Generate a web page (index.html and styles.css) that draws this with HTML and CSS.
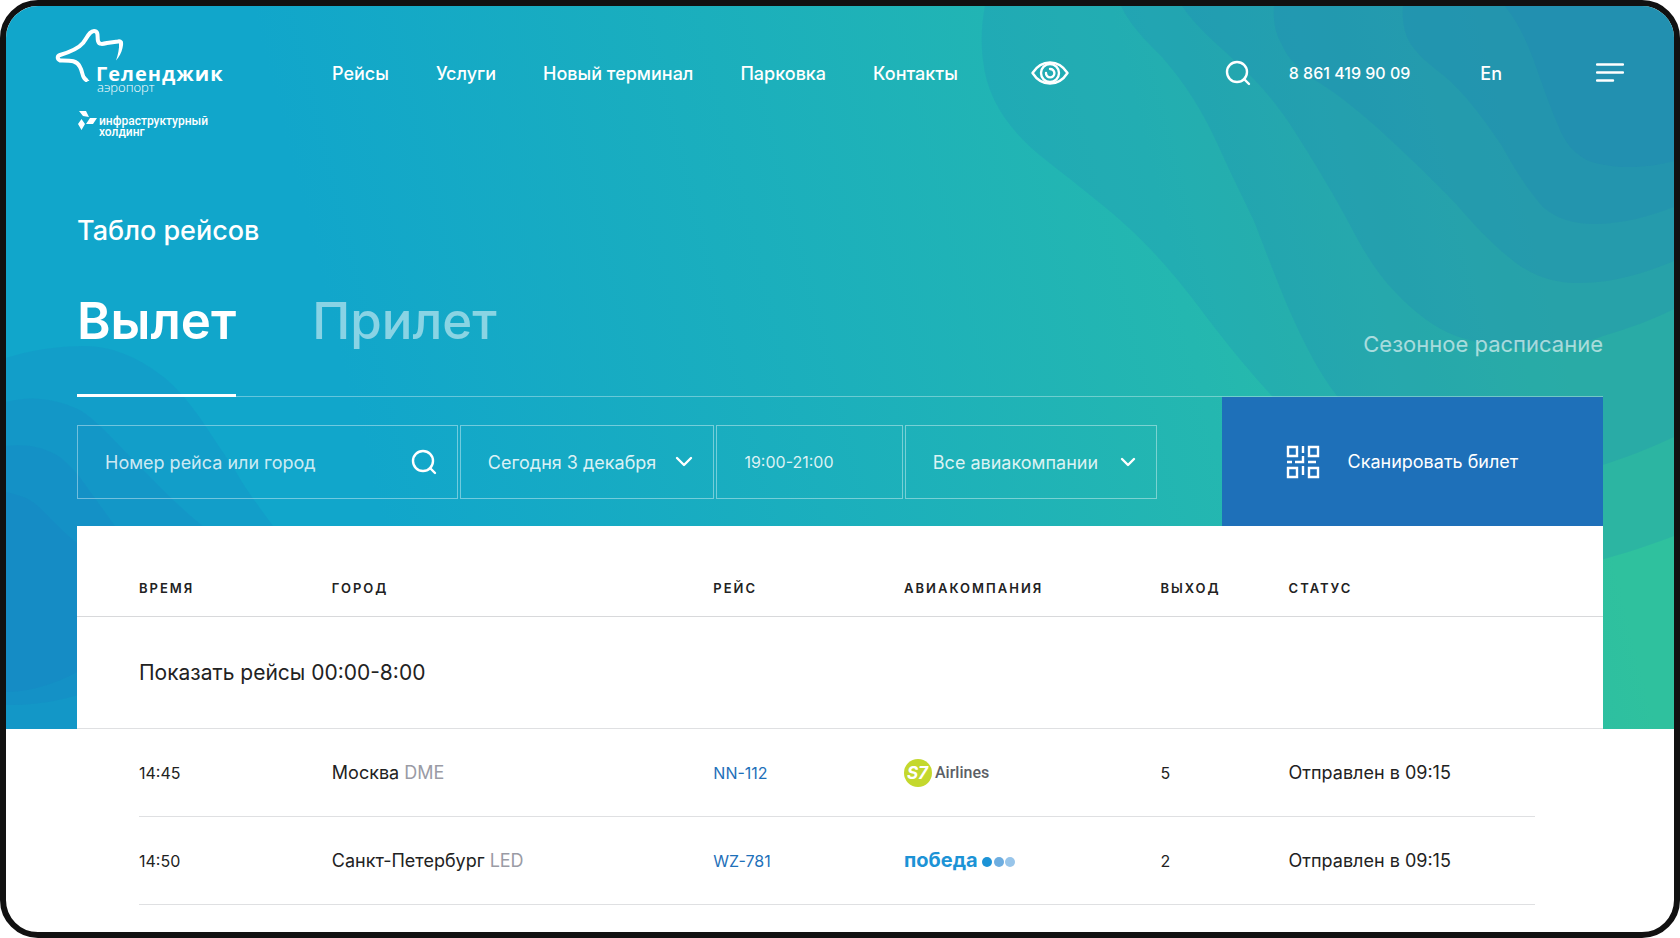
FILE: index.html
```html
<!DOCTYPE html>
<html lang="ru">
  <head>
    <meta charset="UTF-8" />
    <meta name="viewport" content="width=device-width, initial-scale=1" />
    <title>Табло рейсов — Геленджик аэропорт</title>
    <link rel="stylesheet" href="styles.css">
  </head>
  <body>
    <div class="frame">
      <!-- Gradient and waves behind the top of the page -->
      <svg class="hero-bg" viewBox="6 6 1668 723" preserveAspectRatio="none" aria-hidden="true">
        <defs>
          <linearGradient id="sea" gradientUnits="userSpaceOnUse" x1="250" y1="0" x2="1403" y2="-288">
            <stop offset="0" stop-color="#11a6cb" />
            <stop offset="0.7" stop-color="#24b7b0" />
            <stop offset="1" stop-color="#2fc19e" />
          </linearGradient>
        </defs>
        <rect x="6" y="6" width="1668" height="723" fill="url(#sea)" />
        <g class="waves">
          <path d="M985 6C981 25 981 45 983 60C987 100 1010 132 1047 161C1080 187 1105 206 1130 229C1158 255 1180 282 1199 307C1225 342 1250 372 1272 396C1330 480 1400 560 1480 572C1540 580 1610 560 1674 536V6Z" />
          <path d="M1121 6C1130 25 1145 40 1162 57C1185 83 1203 112 1217 143C1232 176 1244 200 1254 221C1266 252 1278 284 1291 314C1304 343 1318 371 1337 396C1380 455 1430 482 1500 483C1560 482 1620 462 1674 437V6Z" />
          <path d="M1182 6C1197 28 1215 42 1235 61C1260 83 1279 107 1295 132C1316 165 1334 195 1350 225C1364 252 1378 275 1396 293C1415 313 1435 328 1456 336C1510 354 1570 350 1603 336C1630 328 1652 320 1674 309V6Z" />
          <path d="M1274 6C1273 20 1275 32 1281 43C1288 60 1301 71 1318 82C1342 97 1362 114 1382 132C1408 156 1433 180 1456 204C1474 225 1492 244 1511 259C1530 275 1553 283 1575 283C1612 284 1645 273 1674 261V6Z" />
          <path d="M1403 6C1402 20 1404 32 1410 43C1421 60 1437 69 1451 82C1470 100 1487 124 1502 146C1515 170 1528 190 1543 207C1557 219 1574 224 1594 224C1624 224 1650 216 1674 207V6Z" />
          <path d="M1505 6C1518 22 1527 42 1534 61C1543 86 1551 110 1561 132C1568 147 1577 155 1589 161C1616 170 1648 168 1674 161V6Z" />
          <path d="M6 358C30 350 58 346 85 346C115 346 142 360 165 378C186 396 202 420 216 442L235 470C246 490 260 508 273 526V729H6Z" />
          <path d="M6 402C28 396 52 397 80 410C96 420 106 432 117 443C132 458 146 473 160 487C174 501 188 514 203 526V729H6Z" />
          <path d="M6 446C25 444 42 446 60 457C70 465 79 475 87 487L115 526V680C80 698 40 706 6 705Z" />
          <path d="M6 492C16 494 24 497 30 500C40 507 43 511 50 518C59 527 67 535 77 543L110 570V650C80 675 40 692 6 692Z" />
        </g>
      </svg>

      <header class="header">
        <a class="logo" href="#">
          <svg width="186" height="114" viewBox="54 26 186 114" role="img" aria-label="Геленджик аэропорт">
            <path class="logo-line" d="M86 80C82 78 83 72 80 67C77 60 70 60.500 60 60.500C57 59 57 56 60 55C70 52 78 49 83 43C88 36 90 31 94 31C99 31 97 37 98 41C99 45 103 44 107 43L118 41.500C120 41 121 41.500 121 43" />
            <path d="M119 41C124 40 123.500 44 122.500 48C121.500 53 119 57 116 60.500C118 55 119.500 48 119 43Z" fill="#fff" />
            <path d="M81 72C83 80 85 81 89.500 81L87 78Z" fill="#fff" />
            <text class="logo-name" x="96" y="81">Геленджик</text>
            <text class="logo-kind" x="97" y="92">аэропорт</text>
            <path d="M79 111H86L89 117L83 116ZM90 118H97L93 124H86ZM81.500 119L85 124L81.500 130L78 124Z" fill="#fff" />
            <text class="logo-holding" x="99" y="125">инфраструктурный</text>
            <text class="logo-holding" x="99" y="136">холдинг</text>
          </svg>
        </a>

        <nav class="nav">
          <a href="#">Рейсы</a>
          <a href="#">Услуги</a>
          <a href="#">Новый терминал</a>
          <a href="#">Парковка</a>
          <a href="#">Контакты</a>
          <button class="icon-btn eye-btn" type="button" aria-label="Версия для слабовидящих">
            <svg class="icon" width="38" height="24" viewBox="0 0 38 24">
              <path d="M1.500 12C6 5 12 1.500 19 1.500S32 5 36.500 12C32 19 26 22.500 19 22.500S6 19 1.500 12Z" />
              <circle cx="19" cy="12" r="9" />
              <path d="M19 8A4.200 4.200 0 1 1 15 12" />
            </svg>
          </button>
        </nav>

        <div class="tools">
          <button class="icon-btn" type="button" aria-label="Поиск">
            <svg class="icon" width="26" height="26" viewBox="0 0 26 26">
              <circle cx="12" cy="12" r="10" />
              <path d="M19 19L24 24" />
            </svg>
          </button>
          <a class="phone" href="tel:88614199009">8 861 419 90 09</a>
          <a class="lang" href="#">En</a>
          <button class="icon-btn" type="button" aria-label="Меню">
            <svg class="icon" width="28" height="20" viewBox="0 0 28 20">
              <path d="M1 1.500H27M1 9.500H27M1 17.500H17" />
            </svg>
          </button>
        </div>
      </header>

      <main class="main">
        <h1 class="title">Табло рейсов</h1>

        <div class="tabs">
          <button class="tab active" type="button">Вылет</button>
          <button class="tab" type="button">Прилет</button>
          <a class="season" href="#">Сезонное расписание</a>
        </div>

        <div class="toolbar">
          <form class="filters">
            <label class="field">
              <input type="text" placeholder="Номер рейса или город" aria-label="Номер рейса или город" />
              <svg class="icon" width="26" height="26" viewBox="0 0 26 26">
                <circle cx="12" cy="12" r="10" />
                <path d="M19 19L24 24" />
              </svg>
            </label>
            <label class="field">
              <select aria-label="Дата">
                <option>Сегодня 3 декабря</option>
              </select>
              <svg class="icon arrow" width="18" height="12" viewBox="0 0 18 12">
                <path d="M2 2L9 9L16 2" />
              </svg>
            </label>
            <label class="field">
              <input class="num" type="text" value="19:00-21:00" aria-label="Время" />
            </label>
            <label class="field">
              <select aria-label="Авиакомпания">
                <option>Все авиакомпании</option>
              </select>
              <svg class="icon arrow" width="16" height="12" viewBox="0 0 16 12">
                <path d="M2 3L8 9L14 3" />
              </svg>
            </label>
          </form>
          <button class="scan" type="button">
            <svg class="icon qr" width="34" height="34" viewBox="0 0 34 34">
              <path d="M2 2H11V11H2ZM23 2H32V11H23ZM2 23H11V32H2ZM23 23H32V32H23Z" />
              <path d="M17 1V8M17 11V17H9M1 17H6M22 17H30M17 21V30" />
            </svg>
            Сканировать билет
          </button>
        </div>

        <table class="board">
          <colgroup>
            <col class="col-time" />
            <col class="col-city" />
            <col class="col-flight" />
            <col class="col-airline" />
            <col class="col-gate" />
            <col class="col-status" />
          </colgroup>
          <thead>
            <tr>
              <th>Время</th>
              <th>Город</th>
              <th>Рейс</th>
              <th>Авиакомпания</th>
              <th>Выход</th>
              <th>Статус</th>
            </tr>
          </thead>
          <tbody>
            <tr class="more">
              <td colspan="6">
                <button type="button">Показать рейсы 00:00-8:00</button>
              </td>
            </tr>
            <tr class="flight">
              <td class="num">14:45</td>
              <td>Москва <span class="code">DME</span></td>
              <td class="num"><a href="#">NN-112</a></td>
              <td>
                <svg class="airline" width="110" height="28" viewBox="0 0 110 28" role="img" aria-label="S7 Airlines">
                  <circle cx="14" cy="14" r="14" fill="#c4d82d" />
                  <text class="s7" x="3" y="20">S7</text>
                  <text class="s7-name" x="31" y="19">Airlines</text>
                </svg>
              </td>
              <td class="num">5</td>
              <td>Отправлен в 09:15</td>
            </tr>
            <tr class="flight">
              <td class="num">14:50</td>
              <td>Санкт-Петербург <span class="code">LED</span></td>
              <td class="num"><a href="#">WZ-781</a></td>
              <td>
                <svg class="airline" width="112" height="28" viewBox="0 0 112 28" role="img" aria-label="Победа">
                  <text class="pobeda" x="0" y="20">победа</text>
                  <circle cx="83" cy="15" r="5" fill="#1c93d6" />
                  <circle cx="95" cy="15" r="5" fill="#6dade0" />
                  <circle cx="106" cy="15" r="5" fill="#98c5ea" />
                </svg>
              </td>
              <td class="num">2</td>
              <td>Отправлен в 09:15</td>
            </tr>
          </tbody>
        </table>
      </main>
    </div>
  </body>
</html>
```
FILE: styles.css
```css
* {
  box-sizing: border-box;
}
body {
  margin: 0;
  background: #fff;
  font-family: Inter, "Liberation Sans", sans-serif;
  font-size: 18px;
  color: #222;
}
a {
  color: inherit;
  text-decoration: none;
}
button,
input,
select {
  font: inherit;
  color: inherit;
  background: none;
  border: none;
  padding: 0;
  margin: 0;
}
button {
  cursor: pointer;
}
.frame {
  position: relative;
  min-height: 100vh;
  border: 6px solid #111;
  border-radius: 38px;
  overflow: hidden;
  background: #fff;
}
.hero-bg {
  position: absolute;
  top: 0;
  left: 0;
  width: 100%;
  height: 723px;
}
.waves path {
  fill: #1f70be;
  fill-opacity: 0.14;
}
.icon {
  display: block;
  flex: none;
  fill: none;
  stroke: #fff;
  stroke-width: 2.4;
  stroke-linecap: round;
  stroke-linejoin: round;
}
.num {
  font-size: 16px;
}

/* Header */
.header {
  position: relative;
  display: flex;
  align-items: flex-start;
  padding: 20px 50px 0 48px;
  color: #fff;
  font-weight: 500;
}
.logo {
  flex: none;
  width: 278px;
}
.logo svg {
  display: block;
}
.logo-line {
  fill: none;
  stroke: #fff;
  stroke-width: 4;
  stroke-linecap: round;
  stroke-linejoin: round;
}
.logo text {
  fill: #fff;
}
.logo-name {
  font: 700 20px "Open Sans", sans-serif;
  letter-spacing: 1px;
}
.logo-kind {
  font: 300 13px "Open Sans", sans-serif;
}
.logo-holding {
  font: 500 12px Roboto, sans-serif;
}
.nav {
  display: flex;
  flex: 1;
  align-items: center;
  gap: 47px;
  height: 54px;
  margin-top: 20px;
}
.eye-btn {
  margin-left: 26px;
}
.tools {
  display: flex;
  align-items: center;
  height: 54px;
  margin-top: 20px;
}
.phone {
  margin: 0 70px 0 38px;
  font-size: 16px;
}
.lang {
  margin-right: 94px;
}

/* Flights */
.main {
  position: relative;
  padding: 75px 71px 0;
}
.title {
  margin: 0 0 44px;
  color: #fff;
  font-size: 27px;
  font-weight: 500;
  line-height: 32px;
}
.tabs {
  display: flex;
  align-items: flex-end;
  gap: 76px;
  border-bottom: 1px solid rgba(255, 255, 255, 0.35);
  color: #fff;
}
.tab {
  margin-bottom: -1px;
  padding-bottom: 43px;
  border-bottom: 3px solid transparent;
  font-size: 51px;
  font-weight: 500;
  line-height: 60px;
  color: rgba(255, 255, 255, 0.5);
}
.tab.active {
  border-color: #fff;
  color: #fff;
  font-weight: 600;
}
.season {
  margin-left: auto;
  padding-bottom: 38px;
  font-size: 22px;
  line-height: 28px;
  opacity: 0.6;
}
.toolbar {
  display: flex;
  justify-content: space-between;
  color: #fff;
}
.filters {
  display: grid;
  grid-template-columns: 380fr 254fr 186fr 252fr;
  gap: 2px;
  width: 70.8%;
  padding: 28px 0 27px;
}
.field {
  display: flex;
  align-items: center;
  min-width: 0;
  height: 74px;
  padding: 0 20px 0 27px;
  border: 1px solid rgba(255, 255, 255, 0.4);
}
.field input,
.field select {
  flex: 1;
  min-width: 0;
  height: 100%;
  appearance: none;
  outline: none;
  color: rgba(255, 255, 255, 0.85);
}
.field select {
  cursor: pointer;
}
.field option {
  color: #222;
}
.field input::placeholder {
  color: rgba(255, 255, 255, 0.8);
}
.arrow {
  pointer-events: none;
}
.scan {
  display: flex;
  align-items: center;
  gap: 28px;
  width: 25%;
  padding-left: 64px;
  background: #1e70b9;
}
.qr {
  stroke-linecap: butt;
  stroke-linejoin: miter;
}

/* Board */
.board {
  width: 100%;
  table-layout: fixed;
  border-collapse: collapse;
  background: #fff;
}
.col-time {
  width: 16.7%;
}
.col-city {
  width: 25%;
}
.col-flight {
  width: 12.5%;
}
.col-airline {
  width: 16.8%;
}
.col-gate {
  width: 8.4%;
}
.board th,
.board td {
  padding: 0;
  text-align: left;
}
.board th:first-child,
.board td:first-child {
  padding-left: 62px;
}
.board th {
  padding: 52px 0 18px;
  border-bottom: 1px solid #d8d9db;
  font-size: 13px;
  font-weight: 600;
  line-height: 20px;
  letter-spacing: 2px;
  text-transform: uppercase;
}
.more td {
  height: 112px;
  border-bottom: 1px solid #dfe0e2;
}
.more button {
  font-size: 21px;
}
/* row lines are inset from both sides of the board */
.flight {
  background: linear-gradient(#dfe0e2, #dfe0e2) 62px 100% / calc(100% - 130px) 1px no-repeat;
}
.flight td {
  height: 88px;
}
.flight a {
  color: #1e70b9;
}
.code {
  color: #9a9ba5;
}
.airline {
  display: block;
}
.s7 {
  fill: #fff;
  font: italic 700 17px Inter, sans-serif;
}
.s7-name {
  fill: #5c5f66;
  font: 500 16px Roboto, sans-serif;
}
.pobeda {
  fill: #1c93d6;
  font: 700 20px Inter, sans-serif;
}
```
